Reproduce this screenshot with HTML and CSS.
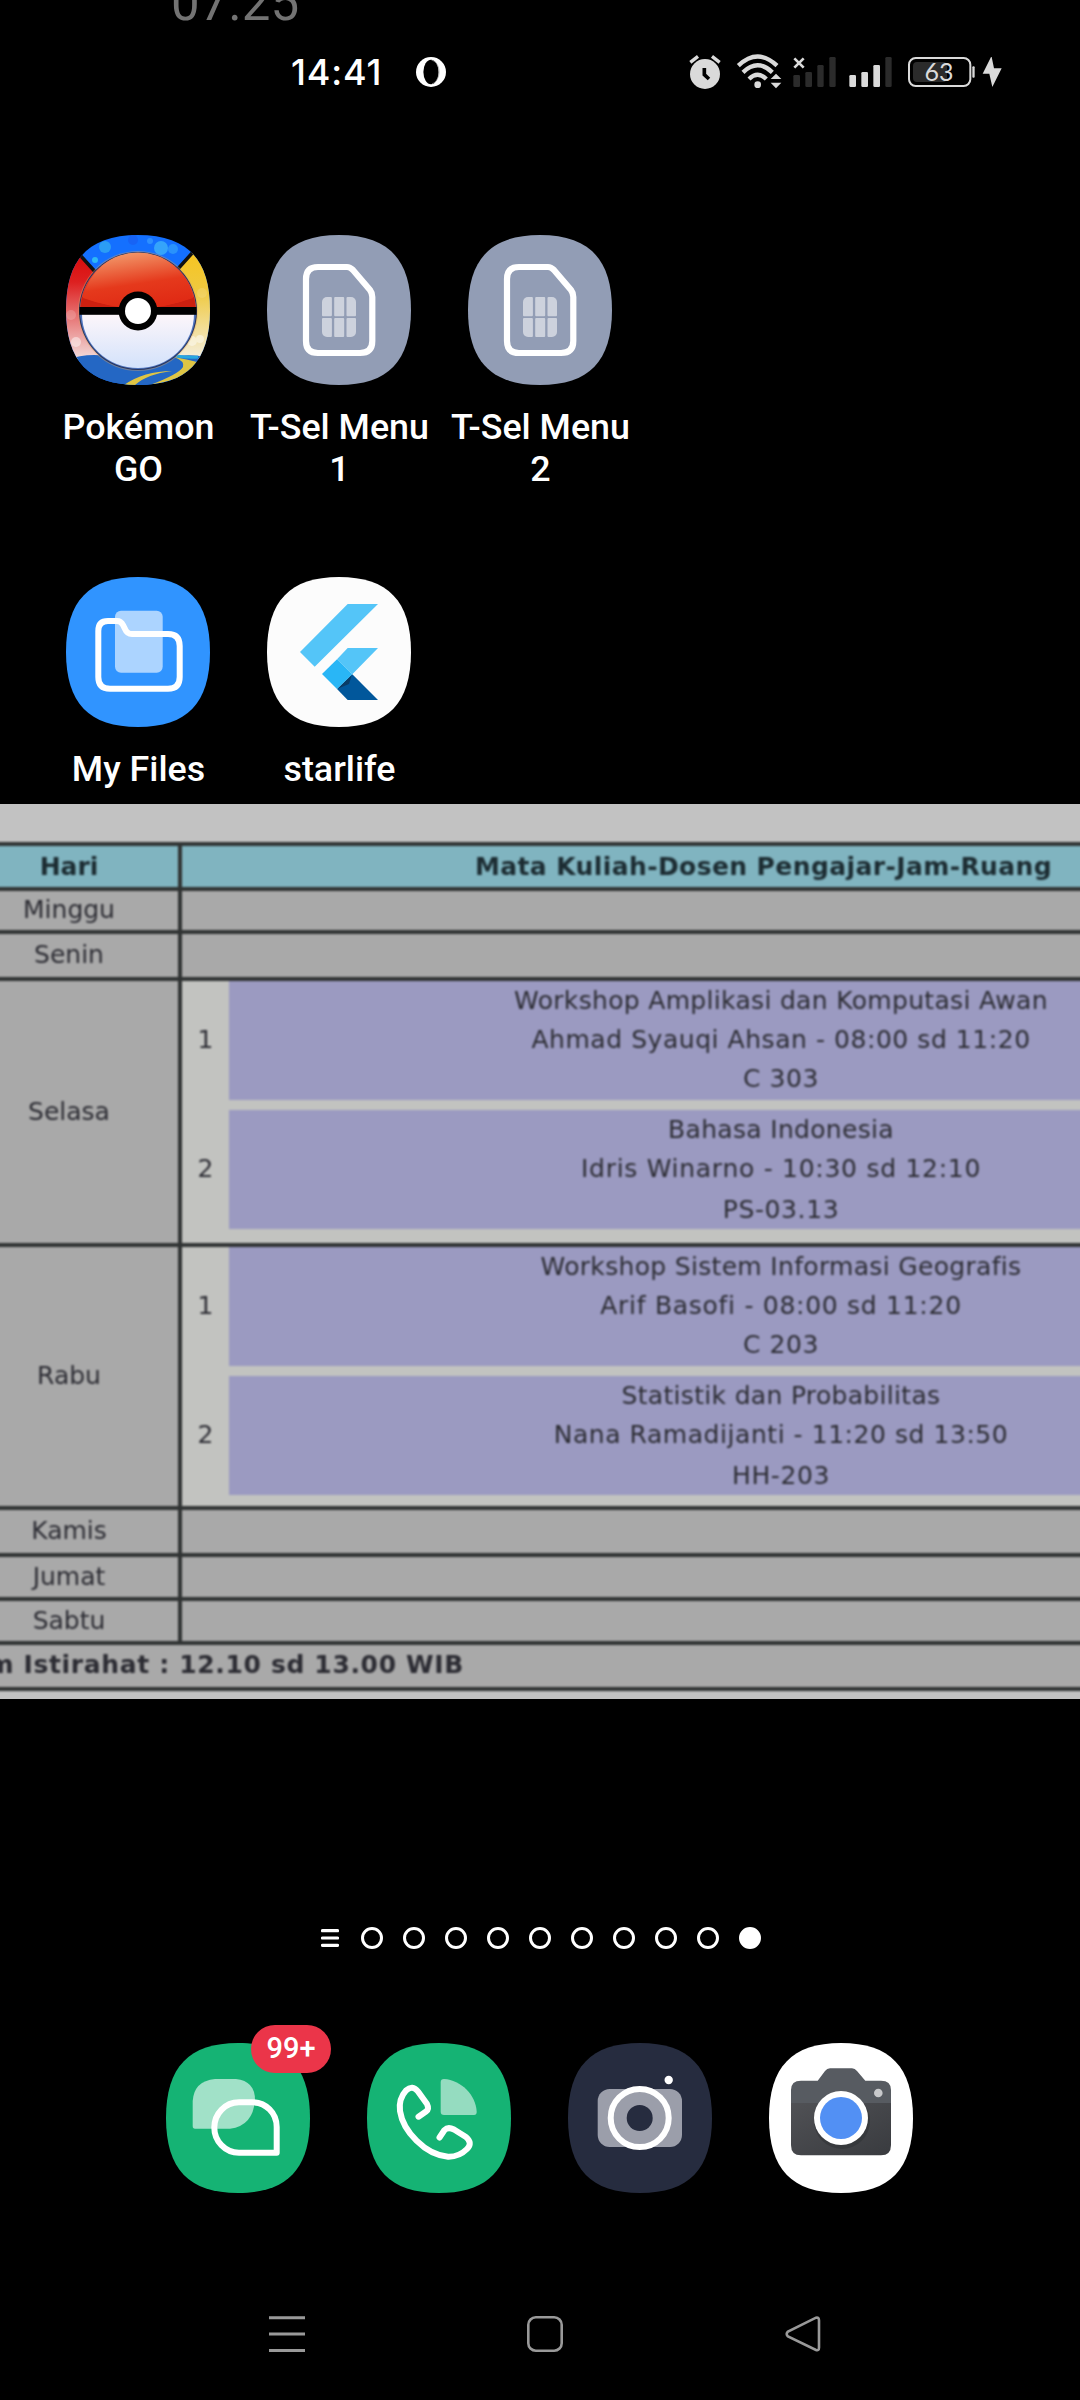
FILE: index.html
```html
<!DOCTYPE html>
<html lang="id">
<head>
<meta charset="utf-8">
<title>Home</title>
<link rel="stylesheet" href="styles.css">
</head>
<body>
<main class="screen">
  <div class="peek"><span>07.25</span></div>

  <header class="status">
    <div class="status-left">
      <span class="clock">14:41</span>
      <svg class="opera" viewBox="0 0 30 30"><circle cx="15" cy="15" r="15" fill="#fff"/><ellipse cx="15" cy="15" rx="7.600" ry="12.200" fill="#000"/><path d="M15.500 3.200C21 4.500 23 10 23 15S20.500 25.500 16 26.800" fill="none" stroke="#999" stroke-width=".7"/></svg>
    </div>
    <svg class="status-icons" viewBox="0 0 1080 270">
      <g fill="#dadada">
        <circle cx="105" cy="132" r="45"/>
        <path d="M61 97L84 79M149 97L126 79" stroke="#dadada" stroke-width="10"/>
        <path d="M103 114V134L117 147" fill="none" stroke="#000" stroke-width="11"/>
        <g fill="none" stroke="#dadada" stroke-width="13">
          <path d="M205 107Q263 52 321 107"/><path d="M219 127Q263 85 307 127"/><path d="M237 147Q263 122 289 147"/>
        </g>
        <circle cx="263" cy="164" r="10"/>
        <path d="M302 147L318 131L334 147ZM302 158H334L318 175Z"/>
        <path d="M373 85L401 113M401 85L373 113" stroke="#dadada" stroke-width="8"/>
        <g fill="#2b2b2b"><rect x="370" y="135" width="20" height="36" rx="4"/><rect x="406" y="126" width="20" height="45" rx="4"/><rect x="442" y="105" width="19" height="66" rx="4"/><rect x="478" y="81" width="19" height="90" rx="4"/><rect x="646" y="81" width="19" height="90" rx="4"/></g>
        <rect x="538" y="135" width="20" height="36" rx="4"/><rect x="574" y="126" width="20" height="45" rx="4"/><rect x="610" y="105" width="20" height="66" rx="4"/>
        <rect x="729" y="96" width="102" height="60" rx="12" fill="#2b2b2b"/>
        <rect x="717" y="84" width="184" height="84" rx="20" fill="none" stroke="#dadada" stroke-width="6"/>
        <rect x="907" y="109" width="7" height="34" rx="3"/>
        <text class="battery" x="807" y="154" text-anchor="middle">63</text>
        <path d="M963 81L938 131H958L967 171L995 115H972L965 81Z"/>
      </g>
    </svg>
  </header>

  <svg class="defs" width="0" height="0"><defs>
    <path id="squircle" d="M0 75C0 24 23 0 72 0S144 24 144 75S121 150 72 150S0 126 0 75Z"/>
    <clipPath id="mask"><use href="#squircle"/></clipPath>
    <linearGradient id="redball" x1=".2" y1="0" x2=".5" y2="1"><stop offset="0" stop-color="#f3a070"/><stop offset=".6" stop-color="#e5391c"/><stop offset="1" stop-color="#e02a14"/></linearGradient>
    <linearGradient id="whiteball" x1="0" y1="0" x2="0" y2="1"><stop offset="0" stop-color="#fdf6fa"/><stop offset="1" stop-color="#d3e2fb"/></linearGradient>
    <linearGradient id="redside" x1="0" y1="0" x2="0" y2="1"><stop offset="0" stop-color="#d80000"/><stop offset=".35" stop-color="#dd2020"/><stop offset="1" stop-color="#f3dedd"/></linearGradient>
    <linearGradient id="yellowside" x1="0" y1="0" x2="0" y2="1"><stop offset="0" stop-color="#fac312"/><stop offset=".45" stop-color="#efc940"/><stop offset="1" stop-color="#f4efe0"/></linearGradient>
    <linearGradient id="body" x1="0" y1="0" x2="1" y2="1"><stop offset="0" stop-color="#505155"/><stop offset="1" stop-color="#393b3f"/></linearGradient>
  </defs></svg>

  <section class="apps">
    <div class="app">
      <svg class="icon" viewBox="0 0 144 150">
        <g clip-path="url(#mask)">
          <rect width="144" height="150" fill="#1470ff"/>
          <circle cx="39" cy="12" r="6" fill="#2b9df5"/><circle cx="95" cy="13" r="7" fill="#35a4fa"/><circle cx="107" cy="14" r="5" fill="#2a92fb"/><circle cx="29" cy="25" r="3" fill="#2eb8f5"/><circle cx="84" cy="6" r="3" fill="#2d8fff"/><circle cx="67" cy="5" r="5" fill="#1763f5"/>
          <path d="M0 5L15.400 21L40 48V125H0Z" fill="url(#redside)"/>
          <path d="M144 0L126 18L104 43V125H144Z" fill="url(#yellowside)"/>
          <g fill="#fff" opacity=".45"><circle cx="10" cy="107" r="5"/><circle cx="134" cy="104" r="4"/><circle cx="126" cy="106" r="5"/><circle cx="5" cy="80" r="5" opacity=".4"/><circle cx="136" cy="58" r="5" opacity=".3"/></g>
          <path d="M14 20L32 40M128 16L110 36" stroke="#111" stroke-width="3.500"/>
          <path d="M0 125Q20 118 40 121H110Q130 119 144 123V150H0Z" fill="#2467c4"/>
          <path d="M110 121Q124 123 132 122" stroke="#27a7e0" stroke-width="3" fill="none"/>
          <path d="M108 122Q124 125 131 127Q126 143 84 150Q113 139 117 132Q119 126 108 122ZM106 136Q78 136 58 150H69Q81 139 106 136Z" fill="#dfc544"/>
        </g>
        <circle cx="72" cy="76" r="60" fill="#d9a264" opacity=".4"/>
        <circle cx="72" cy="76" r="59" fill="#28345c"/>
        <circle cx="72" cy="76" r="58" fill="#4f74bd"/>
        <path d="M14 76A58 58 0 0 1 130 76Z" fill="#e3341c"/>
        <path d="M16 62Q72 84 128 62L130 76H14Z" fill="#cc2010"/>
        <path d="M17 63A56 56 0 0 1 127 63Q72 83 17 63Z" fill="url(#redball)"/>
        <path d="M16 79H128A56 54 0 0 1 16 79Z" fill="url(#whiteball)"/>
        <rect x="13.500" y="72" width="117" height="7.800" fill="#000"/>
        <circle cx="72" cy="76" r="19.400" fill="#000"/><circle cx="72" cy="76" r="13" fill="#fff"/>
      </svg>
      <span class="label">Pokémon GO</span>
    </div>
    <div class="app">
      <svg class="icon" viewBox="0 0 144 150"><use href="#squircle" fill="#929db5"/>
        <path d="M51 32H80Q83 32 86 35L103 55Q105.300 58 105.300 62V106Q105.300 118 93 118H51Q39 118 39 106V44Q39 32 51 32Z" fill="none" stroke="#fff" stroke-width="6.200"/>
        <g fill="#cdd2dd"><path d="M60 62H63.900a1 1 0 0 1 1 1V80.300a1 1 0 0 1-1 1H56a1 1 0 0 1-1-1V67a5 5 0 0 1 5-5Z"/><rect x="67.200" y="62" width="10" height="19.300" rx="1"/><path d="M84 62H80.500a1 1 0 0 0-1 1V80.300a1 1 0 0 0 1 1H88a1 1 0 0 0 1-1V67a5 5 0 0 0-5-5Z"/><path d="M60 102H63.900a1 1 0 0 0 1-1V84a1 1 0 0 0-1-1H56a1 1 0 0 0-1 1V97a5 5 0 0 0 5 5Z"/><rect x="67.200" y="83" width="10" height="19" rx="1"/><path d="M84 102H80.500a1 1 0 0 1-1-1V84a1 1 0 0 1 1-1H88a1 1 0 0 1 1 1V97a5 5 0 0 1-5 5Z"/></g>
      </svg>
      <span class="label">T-Sel Menu 1</span>
    </div>
    <div class="app">
      <svg class="icon" viewBox="0 0 144 150"><use href="#squircle" fill="#929db5"/>
        <path d="M51 32H80Q83 32 86 35L103 55Q105.300 58 105.300 62V106Q105.300 118 93 118H51Q39 118 39 106V44Q39 32 51 32Z" fill="none" stroke="#fff" stroke-width="6.200"/>
        <g fill="#cdd2dd"><path d="M60 62H63.900a1 1 0 0 1 1 1V80.300a1 1 0 0 1-1 1H56a1 1 0 0 1-1-1V67a5 5 0 0 1 5-5Z"/><rect x="67.200" y="62" width="10" height="19.300" rx="1"/><path d="M84 62H80.500a1 1 0 0 0-1 1V80.300a1 1 0 0 0 1 1H88a1 1 0 0 0 1-1V67a5 5 0 0 0-5-5Z"/><path d="M60 102H63.900a1 1 0 0 0 1-1V84a1 1 0 0 0-1-1H56a1 1 0 0 0-1 1V97a5 5 0 0 0 5 5Z"/><rect x="67.200" y="83" width="10" height="19" rx="1"/><path d="M84 102H80.500a1 1 0 0 1-1-1V84a1 1 0 0 1 1-1H88a1 1 0 0 1 1 1V97a5 5 0 0 1-5 5Z"/></g>
      </svg>
      <span class="label">T-Sel Menu 2</span>
    </div>
    <div class="app row-start">
      <svg class="icon" viewBox="0 0 144 150"><use href="#squircle" fill="#3094ff"/>
        <rect x="49" y="33.700" width="47.700" height="62" rx="6" fill="#acd4ff"/>
        <path d="M42 44H51Q55 44 57 48L59 52Q61 57 66 57H102Q113.700 57 113.700 69V100Q113.700 111.700 102 111.700H44Q32.300 111.700 32.300 100V54Q32.300 44 42 44Z" fill="none" stroke="#fff" stroke-width="6"/>
      </svg>
      <span class="label">My Files</span>
    </div>
    <div class="app">
      <svg class="icon" viewBox="0 0 144 150"><use href="#squircle" fill="#fcfcfc"/>
        <path d="M80.700 27H111L47.700 89.700L33 75ZM80.700 71H111L85.300 97.300L70 82.300Z" fill="#54c5f8"/>
        <path d="M85.300 97.300L111 123H80.700L70 112Z" fill="#01579b"/>
        <path d="M70 112L85 97.300L82 107Z" fill="#0a3c66"/>
        <path d="M55 97L70 82.300L85.300 97.300L70 112Z" fill="#29b6f6"/>
      </svg>
      <span class="label">starlife</span>
    </div>
  </section>

  <section class="schedule">
    <div class="sheet">
      <div class="row head h45"><div class="day"><span>Hari</span></div><div class="info"><span class="title">Mata Kuliah-Dosen Pengajar-Jam-Ruang</span></div></div>
      <div class="row h43"><div class="day"><span>Minggu</span></div><div class="info"></div></div>
      <div class="row h47"><div class="day"><span>Senin</span></div><div class="info"></div></div>
      <div class="row h266"><div class="day"><span>Selasa</span></div>
        <div class="info courses">
          <span class="num">1</span><div class="course"><span class="subject">Workshop Amplikasi dan Komputasi Awan</span><span class="lecturer">Ahmad Syauqi Ahsan - 08:00 sd 11:20</span><span class="room">C 303</span></div>
          <span class="num">2</span><div class="course second"><span class="subject">Bahasa Indonesia</span><span class="lecturer wide">Idris Winarno - 10:30 sd 12:10</span><span class="room">PS-03.13</span></div>
        </div></div>
      <div class="row h263"><div class="day"><span>Rabu</span></div>
        <div class="info courses">
          <span class="num">1</span><div class="course"><span class="subject">Workshop Sistem Informasi Geografis</span><span class="lecturer wide">Arif Basofi - 08:00 sd 11:20</span><span class="room">C 203</span></div>
          <span class="num">2</span><div class="course second"><span class="subject">Statistik dan Probabilitas</span><span class="lecturer">Nana Ramadijanti - 11:20 sd 13:50</span><span class="room">HH-203</span></div>
        </div></div>
      <div class="row h47"><div class="day"><span>Kamis</span></div><div class="info"></div></div>
      <div class="row h44"><div class="day"><span>Jumat</span></div><div class="info"></div></div>
      <div class="row h44"><div class="day"><span>Sabtu</span></div><div class="info"></div></div>
      <div class="row h46"><div class="note"><span>Jam Istirahat : 12.10 sd 13.00 WIB</span></div></div>
      <div class="row end"></div>
    </div>
  </section>

  <nav class="pager">
    <svg class="feed" viewBox="0 0 18 18"><path d="M1.500 1.700H16.500M1.500 9H16.500M1.500 16.300H16.500" stroke="#fff" stroke-width="3.200" stroke-linecap="round"/></svg>
    <i class="dot"></i><i class="dot"></i><i class="dot"></i><i class="dot"></i><i class="dot"></i><i class="dot"></i><i class="dot"></i><i class="dot"></i><i class="dot"></i><i class="dot on"></i>
  </nav>

  <section class="dock">
    <div class="dock-app">
      <svg class="icon" viewBox="0 0 144 150"><use href="#squircle" fill="#15b374"/>
        <path d="M49 36H70Q89 38 89 57Q87 83 64 85.700H29Q26.700 85.700 26.700 83V58Q28 38 49 36Z" fill="#a1e1c8"/>
        <path d="M73 59.300H86C100 59.300 110.700 70 110.700 84V109.700H73C59 109.700 48.300 98 48.300 84.500S59 59.300 73 59.300Z" fill="none" stroke="#fff" stroke-width="6" stroke-linejoin="round"/>
      </svg>
      <span class="badge">99+</span>
    </div>
    <svg class="icon" viewBox="0 0 144 150"><use href="#squircle" fill="#15b374"/>
      <path d="M77 36C94 37 109 52 109.700 69Q109.700 72 107 72H77Q73.700 72 73.700 69V39Q73.700 36 77 36Z" fill="#95dcc0"/>
      <path d="M51.500 73.700L59 68.500Q62.500 66 60 61L51 48.500Q45.500 41.500 39 47.500C34 53 32 60 33 68C36 88 58 112 81 113.700Q92 114 100 106Q106 100 99 94L87 86.500Q81 83.500 77.500 87L72.500 94.500" fill="none" stroke="#fff" stroke-width="6" stroke-linecap="round" stroke-linejoin="round"/>
    </svg>
    <svg class="icon" viewBox="0 0 144 150"><use href="#squircle" fill="#262c3f"/>
      <rect x="29.700" y="46" width="84.300" height="58" rx="12" fill="#9b9eaa"/>
      <circle cx="71.700" cy="75" r="29" fill="#9b9eaa" stroke="#fff" stroke-width="6"/><circle cx="71.700" cy="75" r="13" fill="#262c3f"/><circle cx="100.700" cy="37" r="4.200" fill="#fff"/>
    </svg>
    <svg class="icon" viewBox="0 0 144 150"><use href="#squircle" fill="#fff"/>
      <path d="M22 60H122V102Q122 112.300 112 112.300H32Q22 112.300 22 102Z" fill="url(#body)"/>
      <path d="M22 60V47Q22 37.700 32 37.700H48.700L56 28Q58 25.300 61 25.300H83Q86 25.300 88 28L96.300 37.700H112Q122 37.700 122 47V60Z" fill="#575b61"/>
      <circle cx="73" cy="78" r="28" fill="#25272a" opacity=".35"/>
      <circle cx="72" cy="75" r="27" fill="#fff"/><circle cx="72" cy="75" r="21" fill="#5290f4"/><circle cx="109.300" cy="50" r="4.300" fill="#c8c9cb"/>
    </svg>
  </section>

  <nav class="keys">
    <svg viewBox="0 0 36 36"><path d="M0 1.700H36M0 18H36M0 34.500H36" stroke="#999" stroke-width="3"/></svg>
    <svg viewBox="0 0 36 36"><rect x="1.300" y="1.300" width="33.400" height="33.400" rx="7.500" fill="none" stroke="#999" stroke-width="2.600"/></svg>
    <svg viewBox="0 0 36 36"><path d="M31 1.700Q34 1 34 4.500V31.500Q34 35 31 34L3 20.500Q.500 18 3 15.500Z" fill="none" stroke="#999" stroke-width="2.600"/></svg>
  </nav>
</main>
</body>
</html>
```
FILE: styles.css
```css
* { box-sizing: border-box; }
body { margin: 0; background: #000; }
.screen { position: relative; width: 1080px; height: 2400px; overflow: hidden; background: #000; display: flex; flex-direction: column; font-family: Roboto, sans-serif; color: #fff; }
.defs { position: absolute; }
svg { display: block; }

.peek { flex: none; height: 36px; padding-left: 171px; overflow: hidden; display: flex; align-items: flex-start; font-size: 51px; line-height: 60px; color: #737373; }
.peek span { margin-top: -27px; }

.status { flex: none; height: 72px; display: flex; justify-content: space-between; padding: 0 50px 0 291px; }
.status-left { display: flex; align-items: center; gap: 34px; }
.clock { font: 500 36px/44px Inter, sans-serif; letter-spacing: .8px; }
.opera { width: 30px; height: 30px; }
.status-icons { width: 360px; height: 90px; margin-top: -6px; }
.battery { font: 400 75px Lato, sans-serif; }

.apps { flex: none; height: 696px; padding: 127px 0 0 37px; display: grid; grid-template-columns: repeat(3, 201px); grid-auto-rows: 342px; }
.app { display: flex; flex-direction: column; align-items: center; gap: 21px; }
.row-start { grid-column: 1; }
.icon { width: 144px; height: 150px; flex: none; }
.label { width: 192px; padding-left: 2px; text-align: center; font-size: 35.8px; line-height: 42px; font-weight: 500; }

.schedule { flex: none; height: 895px; padding-top: 38px; overflow: hidden; background: #c2c2c2; }
.sheet { width: 1373px; margin-left: -40px; font: 25px/39px "DejaVu Sans", sans-serif; color: #2c2c33; filter: blur(.8px); }
.row { display: flex; border-top: 4px solid #303333; }
.day { width: 222px; border-right: 4px solid #303333; display: flex; align-items: center; justify-content: center; padding-bottom: 2px; background: #a9a9a9; }
.info { flex: 1; background: #a9a9a9; display: flex; align-items: center; justify-content: center; }
.head { font-weight: 700; color: #1c2c32; }
.head .day, .head .info { padding-bottom: 0; background: #80b4c0; }
.title { margin-left: 12px; letter-spacing: .4px; }
.h43 { height: 43px; }
.h44 { height: 44px; }
.h45 { height: 45px; }
.h46 { height: 46px; }
.h47 { height: 47px; }
.h263 { height: 263px; }
.h266 { height: 266px; }
.end { height: 4px; }
.courses { display: grid; grid-template-columns: 47px 1fr; grid-template-rows: 119px 119px; gap: 10px 0; align-content: start; background: #c2c3c0; }
.num { padding-bottom: 2px; text-align: center; }
.course { width: 100%; height: 119px; background: #9b9ac1; display: flex; flex-direction: column; align-items: center; white-space: nowrap; }
.subject { letter-spacing: .32px; }
.lecturer { letter-spacing: .55px; }
.wide { letter-spacing: .72px; }
.room { letter-spacing: .6px; }
.second .room { margin-top: 2px; }
.note { flex: 1; display: flex; align-items: center; padding-bottom: 3px; background: #a9a9a9; font-weight: 700; letter-spacing: .65px; }

.pager { flex: none; height: 344px; padding: 228px 0 0 321px; display: flex; align-items: flex-start; }
.feed { width: 18px; height: 18px; margin: 2px 22px 0 0; }
.dot { width: 22px; height: 22px; margin-right: 20px; border: 3px solid #fff; border-radius: 50%; }
.on { background: #fff; }

.dock { flex: none; height: 150px; padding-left: 166px; display: flex; gap: 57px; }
.dock-app { position: relative; }
.badge { position: absolute; left: 85px; top: -18px; width: 80px; height: 48px; border-radius: 24px; background: #eb3549; text-align: center; font-size: 29px; line-height: 47px; font-weight: 500; }

.keys { flex: none; padding: 123px 259px 0 269px; display: flex; justify-content: space-between; }
.keys svg { width: 36px; height: 36px; }
```
